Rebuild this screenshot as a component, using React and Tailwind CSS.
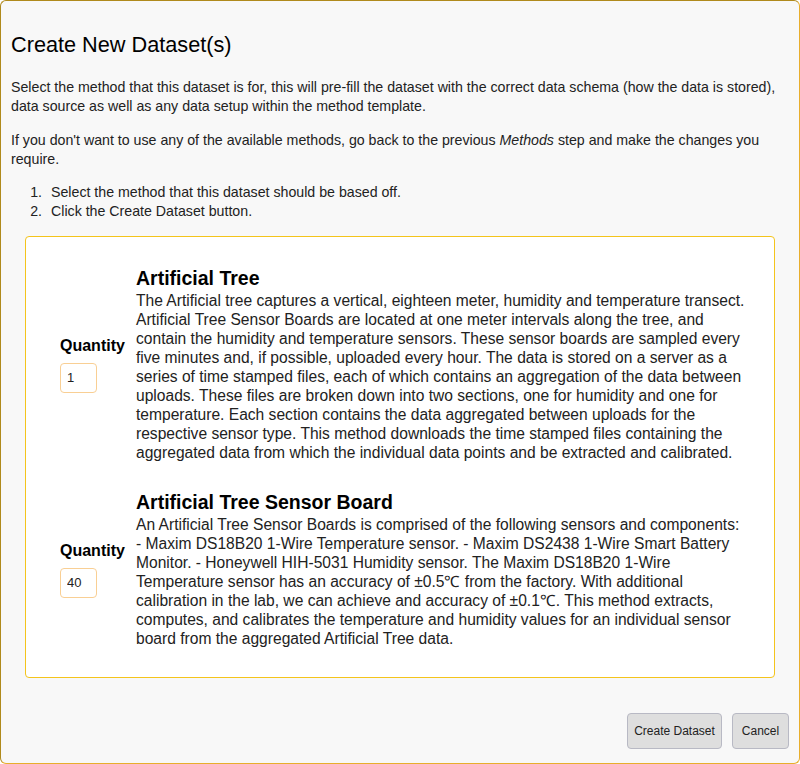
export default function App() {
  const methods = [
    {
      name: "Artificial Tree",
      qty: "1",
      text: "The Artificial tree captures a vertical, eighteen meter, humidity and temperature transect. Artificial Tree Sensor Boards are located at one meter intervals along the tree, and contain the humidity and temperature sensors. These sensor boards are sampled every five minutes and, if possible, uploaded every hour. The data is stored on a server as a series of time stamped files, each of which contains an aggregation of the data between uploads. These files are broken down into two sections, one for humidity and one for temperature. Each section contains the data aggregated between uploads for the respective sensor type. This method downloads the time stamped files containing the aggregated data from which the individual data points and be extracted and calibrated.",
    },
    {
      name: "Artificial Tree Sensor Board",
      qty: "40",
      text: "An Artificial Tree Sensor Boards is comprised of the following sensors and components: - Maxim DS18B20 1-Wire Temperature sensor. - Maxim DS2438 1-Wire Smart Battery Monitor. - Honeywell HIH-5031 Humidity sensor. The Maxim DS18B20 1-Wire Temperature sensor has an accuracy of ±0.5℃ from the factory. With additional calibration in the lab, we can achieve and accuracy of ±0.1℃. This method extracts, computes, and calibrates the temperature and humidity values for an individual sensor board from the aggregated Artificial Tree data.",
    },
  ];

  const steps = [
    "Select the method that this dataset should be based off.",
    "Click the Create Dataset button.",
  ];

  return (
    <div className="h-[764px] w-[800px] font-['Liberation_Sans',Arial,sans-serif] text-[#222]">
      <div className="flex h-full flex-col rounded-md border border-t-[#b08a1c] border-l-[#b08a1c] border-r-[#e8ae2c] border-b-[#e8ae2c] bg-[#f8f8f8] px-[10px]">
        <h1 className="mt-[31px] text-[21.7px] leading-[26px] text-black">Create New Dataset(s)</h1>

        <p className="mt-[20px] text-[14.2px] leading-[19px]">
          Select the method that this dataset is for, this will pre-fill the dataset with the correct data schema (how the data is stored), data source as well as any data setup within the method template.
        </p>
        <p className="mt-[15px] text-[14.2px] leading-[19px]">
          If you don't want to use any of the available methods, go back to the previous <em>Methods</em> step and make the changes you require.
        </p>
        <ol className="mt-[14px] text-[14.2px] leading-[19px]">
          {steps.map((s, i) => (
            <li key={s} className="flex">
              <span className="w-[31px] shrink-0 text-right">{i + 1}.</span>
              <span className="ml-[9px]">{s}</span>
            </li>
          ))}
        </ol>

        <div className="mx-[14px] mt-[15px] flex flex-col gap-[28px] rounded border border-[#f4c41c] bg-white pb-[29px] pl-[34px] pr-[28px] pt-[29px]">
          {methods.map((m) => (
            <div key={m.name} className="flex items-center gap-[12px]">
              <div className="flex w-[64px] shrink-0 flex-col">
                <label className="text-[16px] font-bold leading-[20px] text-black">Quantity</label>
                <input
                  type="text"
                  defaultValue={m.qty}
                  className="mt-[7px] h-[30px] w-[37px] rounded border border-[#f9cf94] bg-white px-[6px] text-[13px] text-[#222] outline-none"
                />
              </div>
              <div className="min-w-0 flex-1">
                <h2 className="text-[19.5px] font-bold leading-[25px] text-black">{m.name}</h2>
                <p className="text-[15.6px] leading-[19px]">{m.text}</p>
              </div>
            </div>
          ))}
        </div>

        <div className="mt-auto mb-[14px] flex justify-end gap-[10px]">
          <button className="h-[36px] w-[95px] rounded border border-[#b8b9c4] bg-[#dedede] text-[12px] text-[#222]">
            Create Dataset
          </button>
          <button className="h-[36px] w-[57px] rounded border border-[#b8b9c4] bg-[#dedede] text-[12px] text-[#222]">
            Cancel
          </button>
        </div>
      </div>
    </div>
  );
}
